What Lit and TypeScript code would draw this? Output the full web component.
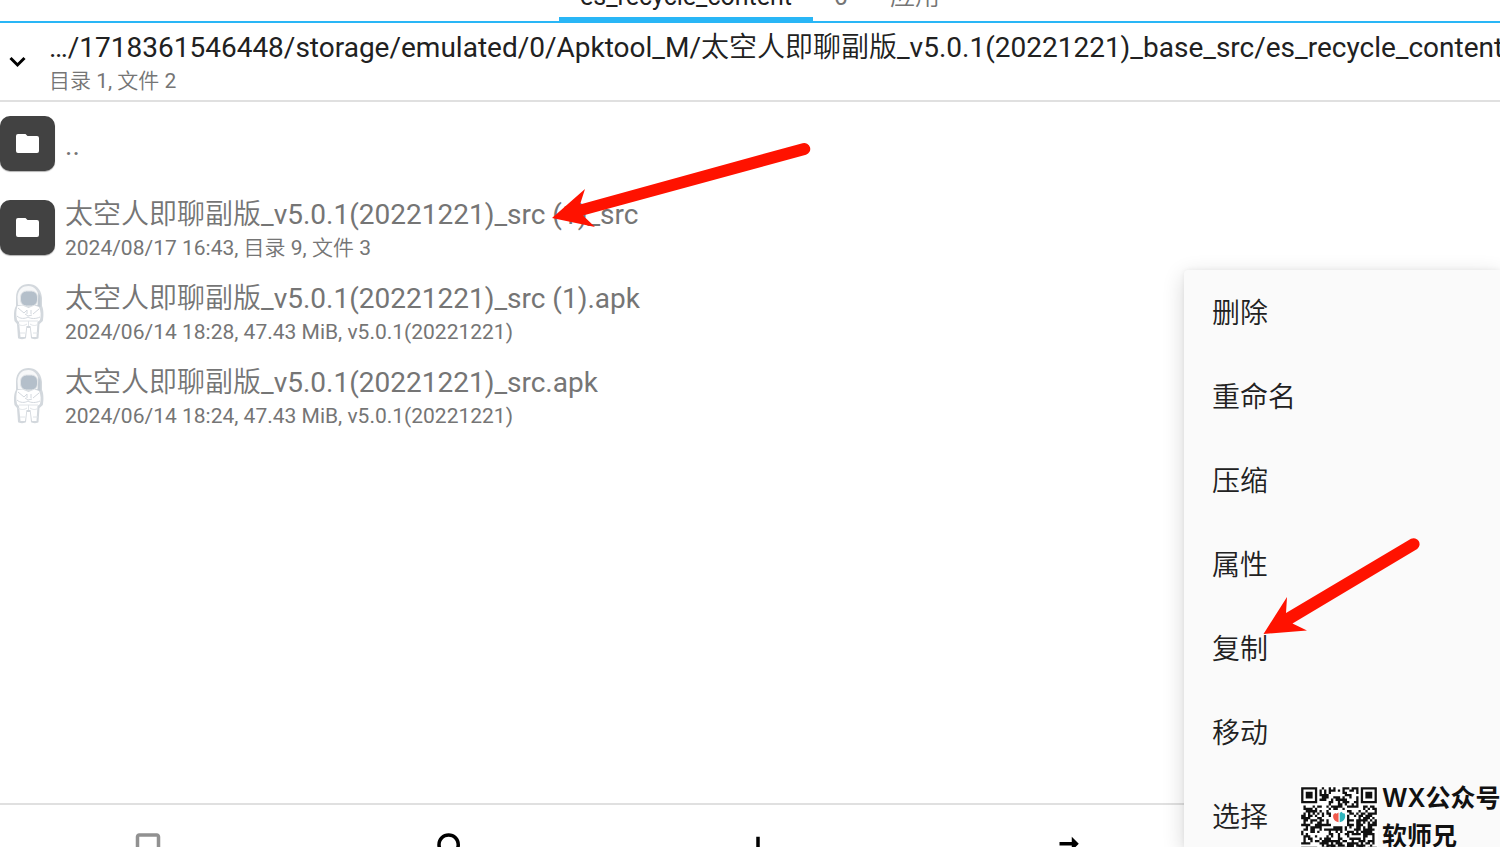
import { LitElement, html, css, svg } from 'lit';
import { customElement, property } from 'lit/decorators.js';

interface Entry {
  kind: 'folder' | 'apk';
  name: string;
  info?: string;
}

const ENTRIES: Entry[] = [
  { kind: 'folder', name: '..' },
  { kind: 'folder', name: '太空人即聊副版_v5.0.1(20221221)_src (1)_src', info: '2024/08/17 16:43, 目录 9, 文件 3' },
  { kind: 'apk', name: '太空人即聊副版_v5.0.1(20221221)_src (1).apk', info: '2024/06/14 18:28, 47.43 MiB, v5.0.1(20221221)' },
  { kind: 'apk', name: '太空人即聊副版_v5.0.1(20221221)_src.apk', info: '2024/06/14 18:24, 47.43 MiB, v5.0.1(20221221)' },
];

const MENU = ['删除', '重命名', '压缩', '属性', '复制', '移动', '选择'];

const TOOLS = [
  { label: '书签', muted: true, d: 'M17 3H7c-1.1 0-2 .9-2 2v16l7-3 7 3V5c0-1.1-.9-2-2-2zm0 15l-5-2.2L7 18V5h10v13z' },
  { label: '搜索', muted: false, d: 'M15.5 14h-.79l-.28-.27A6.47 6.47 0 0 0 16 9.5 6.5 6.5 0 1 0 9.5 16c1.61 0 3.09-.59 4.23-1.57l.27.28v.79l5 4.99L20.49 19l-4.99-5zm-6 0C7.01 14 5 11.99 5 9.5S7.01 5 9.5 5 14 7.01 14 9.5 11.99 14 9.5 14z' },
  { label: '新建', muted: false, d: 'M19 13h-6v6h-2v-6H5v-2h6V5h2v6h6v2z' },
  { label: '切换', muted: false, d: 'M6.99 11L3 15l3.99 4v-3H14v-2H6.99v-3zM21 9l-3.99-4v3H10v2h7.01v3L21 9z' },
  { label: '更多', muted: false, d: 'M3 18h18v-2H3v2zm0-5h18v-2H3v2zm0-7v2h18V6H3z' },
];

/* Code symbol: 33 modules a side, three finder squares, a clear middle for the logo. */
function qrPath(): string {
  const n = 33;
  let seed = 20221221;
  let d = '';
  const finder = (x: number, y: number): boolean | null => {
    for (const [fx, fy] of [[0, 0], [n - 7, 0], [0, n - 7]]) {
      const dx = x - fx;
      const dy = y - fy;
      if (dx >= -1 && dx <= 7 && dy >= -1 && dy <= 7) {
        if (dx < 0 || dx > 6 || dy < 0 || dy > 6) return false;
        const ring = Math.max(Math.abs(dx - 3), Math.abs(dy - 3));
        return ring !== 2;
      }
    }
    return null;
  };
  for (let y = 0; y < n; y++) {
    for (let x = 0; x < n; x++) {
      seed = (Math.imul(seed, 1664525) + 1013904223) >>> 0;
      const f = finder(x, y);
      const middle = x >= 13 && x <= 19 && y >= 10 && y <= 16;
      const dark = f === null ? !middle && (seed >>> 16) % 100 < 54 : f;
      if (dark) d += `M${x} ${y}h1v1h-1z`;
    }
  }
  return d;
}

const QR = qrPath();

@customElement('file-icon')
class FileIcon extends LitElement {
  @property() kind = 'folder';

  static styles = css`
    :host { display: block; flex: none; width: 55px; height: 56px; }
    .tile {
      display: grid; place-items: center; width: 55px; height: 55px;
      border-radius: 10px; background: #424242; box-shadow: 0 1px 1px rgba(0, 0, 0, .3);
    }
    svg { display: block; }
  `;

  render() {
    if (this.kind === 'folder') {
      return html`<div class="tile"><svg width="23" height="19" viewBox="0 0 23 19">
        <path fill="#fff" d="M2 0h7.5l2 2H21a2 2 0 0 1 2 2v13a2 2 0 0 1-2 2H2a2 2 0 0 1-2-2V2a2 2 0 0 1 2-2z"/></svg></div>`;
    }
    return html`<svg width="55" height="56" viewBox="0 0 55 56">
      <path fill="#d3d8dd" d="M16 14C16 4 22 0 28.500 0S41 4 42 14v8c1.500 3 2 9 .8 15L39.500 40l-1 14c0 1.500-7 1.500-7.500 0l-1-10h-3l-1 10c-.5 1.500-7.500 1.500-8 0l-1-14-2.500-3c-1-6-.5-12 1.500-15z"/>
      <path fill="#f7f8f9" d="M17.500 13C18 5 23 2 28.500 2S38 6 38.500 13l-.5 8H18z"/>
      <path fill="#c3cbd3" d="M38.500 9l2 3v11l-3-1z"/>
      <rect x="20.500" y="7" width="17" height="15" rx="6" fill="#b4bfca" stroke="#e3e6e9"/>
      <path fill="#fff" d="M17.500 22l5-.5 6 2.500 6-2.500 4.500 1.500c2 4 2 9 1 13l-2.500 2-1 15h-4.500l-1.500-11h-4l-1.500 11h-4.500l-1.500-15-2-2c-1-5-1-10 .5-14z"/>
      <g fill="none" stroke="#d3d8de">
        <path d="M18 24l6 5 3-3M39 25l-6 5M25 30l3 2 4-1M27 26v4M31 26v4M17 32c3 3 8 3 11 1 3 2 8 2 12 0"/>
        <path stroke="#e0e4e8" d="M19 37h19M28.500 37v5M20 49h5M33 49h5M18 40c3 2 6 2 9 0M30 40c3 2 6 2 8 0"/>
      </g>
    </svg>`;
  }
}

@customElement('app-root')
class AppRoot extends LitElement {
  static styles = css`
    :host {
      display: flex; flex-direction: column; position: relative; box-sizing: border-box;
      height: 100vh; overflow: hidden; background: #fff; color: #212121;
      font-family: Roboto, "Noto Sans CJK SC DemiLight", "Noto Sans CJK SC", sans-serif;
      font-size: 28px; line-height: 36px;
    }
    button { margin: 0; padding: 0; border: 0; background: none; color: inherit; font: inherit; text-align: left; }
    svg { display: block; }
    .tabs {
      flex: none; display: flex; align-items: flex-end; height: 21px;
      padding-left: 559px; border-bottom: 2px solid #29b6f6;
    }
    .tabs .tab {
      flex: none; padding: 0 21px 4px; white-space: nowrap;
      font-size: 25px; line-height: 32px; color: #757575; border-bottom: 4px solid transparent;
    }
    .tabs .active { color: #212121; border-color: #29b6f6; }
    .path {
      flex: none; display: flex; align-items: center; gap: 23px; height: 77px;
      padding-left: 9px; border-bottom: 2px solid #e0e0e0;
    }
    .text { display: flex; flex-direction: column; min-width: 0; padding-top: 3px; }
    .line { white-space: nowrap; }
    .sub { white-space: nowrap; font-size: 21px; line-height: 30px; color: #757575; }
    .list { flex: 1; min-height: 0; margin: 0; padding: 0; list-style: none; }
    .row { display: flex; align-items: center; gap: 10px; width: 100%; height: 84px; color: #757575; }
    .tools {
      flex: none; display: flex; height: 42px; margin: 0 -20px 0 -5px; border-top: 2px solid #e0e0e0;
    }
    .tool { flex: 1; display: flex; justify-content: center; padding-top: 23px; color: #000; }
    .tool.muted { color: #919191; }
    .menu {
      position: absolute; top: 270px; right: 0; bottom: 0; width: 316px;
      background: #fafafa; border-radius: 4px 0 0 0;
      box-shadow: 0 6px 22px rgba(0, 0, 0, .16), 0 0 5px rgba(0, 0, 0, .06);
    }
    .item { display: block; width: 100%; height: 84px; padding: 3px 0 0 28px; }
    .mark { position: absolute; left: 0; top: 0; pointer-events: none; }
    .badge {
      position: absolute; top: 786px; right: 0; display: flex; gap: 4px; width: 200px;
      color: #111; font-family: Inter, "Noto Sans CJK SC", sans-serif;
      font-size: 25px; line-height: 38px; font-weight: 600; white-space: nowrap;
    }
    .names { display: flex; flex-direction: column; margin-top: -7px; }
    .qr { flex: none; background: #fff; }
  `;

  render() {
    return html`
      <nav class="tabs">
        <button class="tab active">es_recycle_content</button>
        <button class="tab">0</button>
        <button class="tab">应用</button>
      </nav>
      <header class="path">
        <button aria-label="展开"><svg width="17" height="12" viewBox="0 0 17 12">
          <path d="M1.500 2l7 7 7-7" fill="none" stroke="#000" stroke-width="3"/></svg></button>
        <div class="text">
          <span class="line">…/1718361546448/storage/emulated/0/Apktool_M/太空人即聊副版_v5.0.1(20221221)_base_src/es_recycle_content</span>
          <span class="sub">目录 1, 文件 2</span>
        </div>
      </header>
      <ul class="list">
        ${ENTRIES.map((e) => html`<li><button class="row">
          <file-icon kind=${e.kind}></file-icon>
          <span class="text">
            <span class="line">${e.name}</span>
            ${e.info ? html`<span class="sub">${e.info}</span>` : ''}
          </span>
        </button></li>`)}
      </ul>
      <footer class="tools">
        ${TOOLS.map((t) => html`<button class="tool ${t.muted ? 'muted' : ''}" aria-label=${t.label}>
          <svg width="42" height="42" viewBox="0 0 24 24"><path fill="currentColor" d=${t.d}/></svg>
        </button>`)}
      </footer>
      <div class="menu" role="menu">
        ${MENU.map((m) => html`<button class="item" role="menuitem">${m}</button>`)}
      </div>
      <svg class="mark" width="1500" height="847" viewBox="0 0 1500 847" fill="#ff1200">
        <path d="M552 218L585 189 580 204.500 802.500 143.200A6 6 0 0 1 806 154.700L583 215.500 595 227z"/>
        <path d="M1263.500 634L1287 597 1286 613 1411 538.800A6 6 0 0 1 1417.200 549L1292.500 623.500 1307 630.500z"/>
      </svg>
      <div class="badge">
        <svg class="qr" width="78" height="78" viewBox="-0.5 -0.5 34 34">
          <path fill="#111" d=${QR}/>
          ${svg`<path fill="#f0594b" d="M16.300 11v4.300c-1.800-.5-2.600-1.600-2.300-3.300l.8-.7.600.3z"/>
          <path fill="#2fb5bd" d="M16.800 15.300v-4l.8-.6.6.7.800.1c.6 2-.2 3.500-2.200 3.800z"/>`}
        </svg>
        <div class="names"><span>WX公众号</span><span>软师兄</span></div>
      </div>
    `;
  }
}
